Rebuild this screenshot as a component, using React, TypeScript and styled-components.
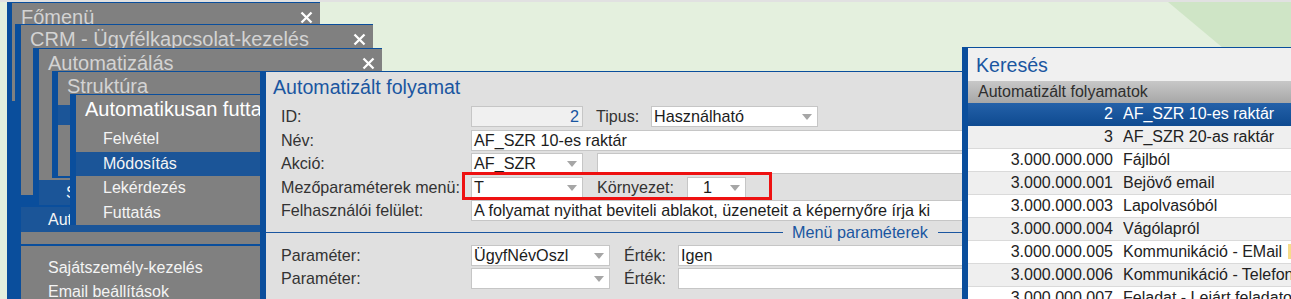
import React from "react";
import styled, { createGlobalStyle } from "styled-components";

const BLUE = "#0a4e9c";
const TEXT_BLUE = "#1a56a0";

const GlobalStyle = createGlobalStyle`
  html, body { margin: 0; padding: 0; }
  body {
    font-family: "Liberation Sans", Arial, sans-serif;
    background: #e4f0de;
  }
`;

const Desktop = styled.div`
  position: relative;
  width: 1291px;
  height: 299px;
  overflow: hidden;
  background:
    linear-gradient(#e1e1e1, #e1e1e1) top left / 100% 2px no-repeat,
    #e4f0de;

  &::before {
    content: "";
    position: absolute;
    inset: 0;
    background: #cfe5c6;
    clip-path: polygon(1168px 2px, 1291px 2px, 1291px 105px);
  }
`;

const Win = styled.div<{ $x: number; $y: number; $w: number; $h: number; $strip?: number }>`
  position: absolute;
  left: ${(p) => p.$x}px;
  top: ${(p) => p.$y}px;
  width: ${(p) => p.$w}px;
  height: ${(p) => p.$h}px;
  box-sizing: border-box;
  background: #808080;
  border-left: ${(p) => p.$strip ?? 6}px solid ${BLUE};
  border-top: 1px solid ${BLUE};
  display: flex;
  flex-direction: column;
  overflow: hidden;
`;

const WinTitle = styled.div<{ $h: number; $active?: boolean }>`
  flex: none;
  height: ${(p) => p.$h}px;
  box-sizing: border-box;
  display: flex;
  align-items: flex-start;
  justify-content: space-between;
  padding: 3px 7px 0 9px;
  font-size: 20px;
  line-height: 23px;
  color: ${(p) => (p.$active ? "#ffffff" : "#d3d3d3")};
  white-space: nowrap;
`;

const CloseSvg = styled.svg`
  flex: none;
  width: 13px;
  height: 13px;
  margin-top: 5px;
`;

const CloseIcon = () => (
  <CloseSvg viewBox="0 0 13 13">
    <path d="M1.5 1.5 L11.5 11.5 M11.5 1.5 L1.5 11.5" stroke="#fff" strokeWidth="2.3" />
  </CloseSvg>
);

const Gap = styled.div<{ $h?: number; $blue?: boolean; $fill?: boolean }>`
  flex: ${(p) => (p.$fill ? "1" : "none")};
  height: ${(p) => (p.$h ? `${p.$h}px` : "auto")};
  background: ${(p) => (p.$blue ? BLUE : "transparent")};
`;

const MenuItem = styled.div<{ $active?: boolean; $h?: number }>`
  flex: none;
  height: ${(p) => p.$h ?? 24.5}px;
  display: flex;
  align-items: center;
  padding-left: 27px;
  font-size: 16px;
  color: #f4f4f4;
  white-space: nowrap;
  background: ${(p) => (p.$active ? "#1b5598" : "transparent")};
`;

/* ---------- main form window ---------- */

const FormWin = styled(Win)`
  background: #e0e0e0;
`;

const FormTitle = styled.div`
  flex: none;
  height: 32px;
  box-sizing: border-box;
  padding: 4px 0 0 7px;
  font-size: 19.6px;
  line-height: 22px;
  color: ${TEXT_BLUE};
  white-space: nowrap;
`;

const FormBody = styled.div`
  display: flex;
  flex-direction: column;
  gap: 2.5px;
  padding: 2px 0 0 15px;
`;

const Row = styled.div`
  position: relative;
  display: flex;
  align-items: center;
  height: 21px;
`;

const Label = styled.div<{ $w: number; $ml?: number }>`
  flex: none;
  width: ${(p) => p.$w}px;
  margin-left: ${(p) => p.$ml ?? 0}px;
  font-size: 16.1px;
  color: #333;
  white-space: nowrap;
`;

const Field = styled.div<{ $w?: number; $ml?: number; $right?: boolean; $disabled?: boolean; $blueText?: boolean }>`
  position: relative;
  flex: ${(p) => (p.$w ? "none" : "1")};
  width: ${(p) => (p.$w ? `${p.$w}px` : "auto")};
  margin-left: ${(p) => p.$ml ?? 0}px;
  height: 21px;
  box-sizing: border-box;
  border: 1px solid #c6c6c6;
  background: ${(p) => (p.$disabled ? "#f0f0f0" : "#ffffff")};
  padding: 0 3px 0 2px;
  display: flex;
  align-items: center;
  justify-content: ${(p) => (p.$right ? "flex-end" : "flex-start")};
  font-size: 16.2px;
  color: ${(p) => (p.$blueText ? TEXT_BLUE : "#1c1c1c")};
  white-space: nowrap;
  overflow: hidden;
`;

const SelectField = styled(Field)<{ $center?: boolean }>`
  padding-right: 20px;
  justify-content: ${(p) => (p.$center ? "center" : "flex-start")};

  &::after {
    content: "";
    position: absolute;
    right: 5px;
    top: 7px;
    border-left: 5px solid transparent;
    border-right: 5px solid transparent;
    border-top: 6px solid #a6a6a6;
  }
`;

const Highlight = styled.div`
  position: absolute;
  left: 181px;
  top: -5px;
  width: 310px;
  height: 28px;
  box-sizing: border-box;
  border: 3px solid #ee1111;
  pointer-events: none;
`;

const Divider = styled.div`
  display: flex;
  align-items: center;
  height: 21px;
  margin: 1px 0 1px -10px;
`;

const DividerLine = styled.div<{ $w?: number }>`
  flex: ${(p) => (p.$w ? "none" : "1")};
  width: ${(p) => (p.$w ? `${p.$w}px` : "auto")};
  height: 1px;
  background: ${TEXT_BLUE};
`;

const DividerText = styled.div`
  padding: 0 10px 0 9px;
  font-size: 16.2px;
  color: ${TEXT_BLUE};
  white-space: nowrap;
`;

const ParamBody = styled.div`
  display: flex;
  flex-direction: column;
  gap: 1.5px;
  padding: 1px 0 0 15px;
`;

/* ---------- search window ---------- */

const SearchWin = styled(Win)`
  background: #f0f0f0;
`;

const SearchTitle = styled.div`
  flex: none;
  height: 33px;
  box-sizing: border-box;
  padding: 6px 0 0 8px;
  font-size: 19.6px;
  line-height: 22px;
  color: ${TEXT_BLUE};
`;

const ListHeader = styled.div`
  flex: none;
  height: 22px;
  display: flex;
  align-items: center;
  padding-left: 10px;
  font-size: 16px;
  color: #2e2e2e;
  background: linear-gradient(#c8c8c8, #a7a7a7);
  white-space: nowrap;
`;

const ListRow = styled.div<{ $selected?: boolean; $odd?: boolean }>`
  flex: none;
  height: 23px;
  box-sizing: border-box;
  display: grid;
  grid-template-columns: 145px 1fr;
  column-gap: 10px;
  align-items: center;
  font-size: 16px;
  white-space: nowrap;
  color: ${(p) => (p.$selected ? "#ffffff" : "#222")};
  background: ${(p) =>
    p.$selected ? "linear-gradient(#2461a9, #0f4b91)" : p.$odd ? "#efefef" : "#ffffff"};
  border-bottom: 1px solid ${(p) => (p.$selected ? "#0f4b91" : "#dadada")};
`;

const Num = styled.span`
  text-align: right;
`;

const Name = styled.span`
  overflow: hidden;
`;

const Mark = styled.span`
  display: inline-block;
  width: 10px;
  height: 15px;
  margin-left: 6px;
  vertical-align: -2px;
  background: #f6dc8a;
`;

const listRows: { num: string; name: string; mark?: boolean }[] = [
  { num: "2", name: "AF_SZR 10-es raktár" },
  { num: "3", name: "AF_SZR 20-as raktár" },
  { num: "3.000.000.000", name: "Fájlból" },
  { num: "3.000.000.001", name: "Bejövő email" },
  { num: "3.000.000.003", name: "Lapolvasóból" },
  { num: "3.000.000.004", name: "Vágólapról" },
  { num: "3.000.000.005", name: "Kommunikáció - EMail", mark: true },
  { num: "3.000.000.006", name: "Kommunikáció - Telefon" },
  { num: "3.000.000.007", name: "Feladat - Lejárt feladatok" },
];

const subMenu = ["Felvétel", "Módosítás", "Lekérdezés", "Futtatás"];

export default function App() {
  return (
    <>
      <GlobalStyle />
      <Desktop>
        <Win $x={7} $y={2} $w={313} $h={300} $strip={5}>
          <WinTitle $h={22}>
            <span>Főmenü</span>
            <CloseIcon />
          </WinTitle>
          <Gap $h={76} />
          <Gap $blue $fill />
        </Win>

        <Win $x={15} $y={24} $w={358} $h={280}>
          <WinTitle $h={23}>
            <span>CRM - Ügyfélkapcsolat-kezelés</span>
            <CloseIcon />
          </WinTitle>
          <Gap $h={147} />
          <Gap $h={12} $blue />
          <MenuItem $active $h={25}>Automatizálás</MenuItem>
          <Gap $h={12} />
          <Gap $h={2} $blue />
          <Gap $h={10} />
          <MenuItem $h={24}>Sajátszemély-kezelés</MenuItem>
          <MenuItem $h={24}>Email beállítások</MenuItem>
        </Win>

        <Win $x={33} $y={48} $w={349} $h={159}>
          <WinTitle $h={22}>
            <span>Automatizálás</span>
            <CloseIcon />
          </WinTitle>
          <Gap $h={109} />
          <MenuItem $active $h={25}>Struktúra</MenuItem>
          <Gap $blue $fill />
        </Win>

        <Win $x={52} $y={71} $w={300} $h={107}>
          <WinTitle $h={23}>
            <span>Struktúra</span>
          </WinTitle>
          <Gap $h={10} />
          <MenuItem $active $h={20} />
          <Gap $h={51} />
          <Gap $blue $fill />
        </Win>

        <Win $x={70} $y={94} $w={190} $h={131}>
          <WinTitle $h={32} $active>
            <span>Automatikusan futtatott folyamatok</span>
          </WinTitle>
          {subMenu.map((item) => (
            <MenuItem key={item} $active={item === "Módosítás"}>
              {item}
            </MenuItem>
          ))}
        </Win>

        <FormWin $x={260} $y={71} $w={720} $h={240}>
          <FormTitle>Automatizált folyamat</FormTitle>
          <FormBody>
            <Row>
              <Label $w={190}>ID:</Label>
              <Field $w={112} $right $disabled $blueText>
                2
              </Field>
              <Label $w={55} $ml={13}>
                Tipus:
              </Label>
              <SelectField $w={167}>Használható</SelectField>
            </Row>
            <Row>
              <Label $w={190}>Név:</Label>
              <Field>AF_SZR 10-es raktár</Field>
            </Row>
            <Row>
              <Label $w={190}>Akció:</Label>
              <SelectField $w={112}>AF_SZR</SelectField>
              <Field $ml={14} />
            </Row>
            <Row>
              <Label $w={190}>Mezőparaméterek menü:</Label>
              <SelectField $w={112}>T</SelectField>
              <Label $w={90} $ml={14}>
                Környezet:
              </Label>
              <SelectField $w={59} $center>
                1
              </SelectField>
              <Highlight />
            </Row>
            <Row>
              <Label $w={190}>Felhasználói felület:</Label>
              <Field>A folyamat nyithat beviteli ablakot, üzeneteit a képernyőre írja ki</Field>
            </Row>
          </FormBody>
          <Divider>
            <DividerLine $w={527} />
            <DividerText>Menü paraméterek</DividerText>
            <DividerLine />
          </Divider>
          <ParamBody>
            <Row>
              <Label $w={190}>Paraméter:</Label>
              <SelectField $w={139}>ÜgyfNévOszl</SelectField>
              <Label $w={54} $ml={14}>
                Érték:
              </Label>
              <Field>Igen</Field>
            </Row>
            <Row>
              <Label $w={190}>Paraméter:</Label>
              <SelectField $w={139} />
              <Label $w={54} $ml={14}>
                Érték:
              </Label>
              <Field />
            </Row>
          </ParamBody>
        </FormWin>

        <SearchWin $x={962} $y={47} $w={340} $h={260}>
          <SearchTitle>Keresés</SearchTitle>
          <ListHeader>Automatizált folyamatok</ListHeader>
          {listRows.map((r, i) => (
            <ListRow key={r.num} $selected={i === 0} $odd={i % 2 === 1}>
              <Num>{r.num}</Num>
              <Name>
                {r.name}
                {r.mark && <Mark />}
              </Name>
            </ListRow>
          ))}
        </SearchWin>
      </Desktop>
    </>
  );
}
